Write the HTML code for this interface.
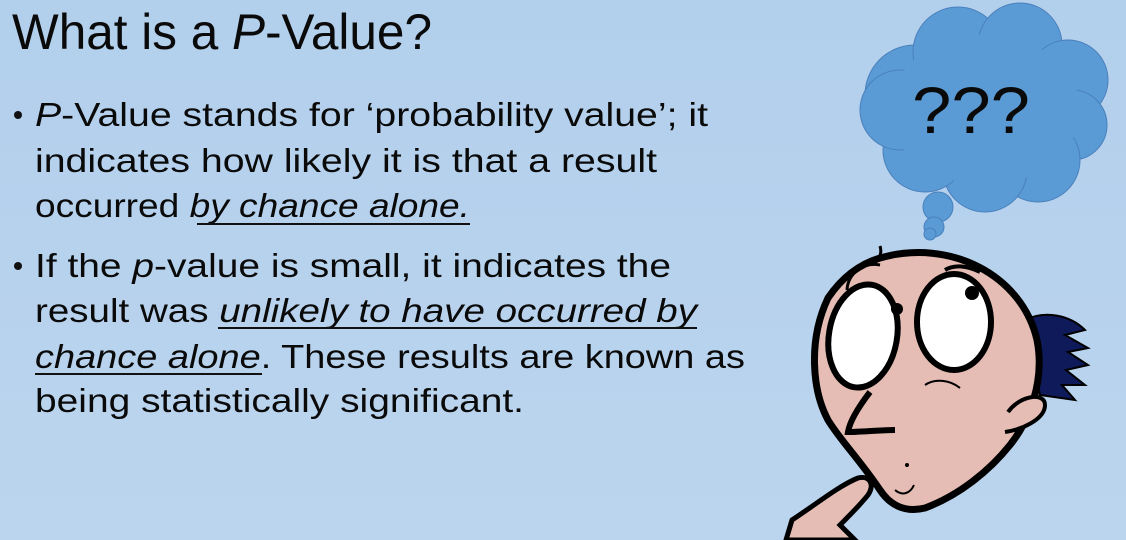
<!DOCTYPE html>
<html><head><meta charset="utf-8"><style>
html,body{margin:0;padding:0;background:#b4d0ec;overflow:hidden}
svg{display:block}
text{font-family:"Liberation Sans",sans-serif;fill:#0a0a0a}
</style></head><body>
<svg width="1126" height="540" viewBox="0 0 1126 540" xmlns="http://www.w3.org/2000/svg">
<defs><linearGradient id="bg" x1="0" y1="0" x2="0" y2="1"><stop offset="0" stop-color="#b2cfec"/><stop offset="1" stop-color="#bcd5ee"/></linearGradient></defs>
<rect width="1126" height="540" fill="url(#bg)"/>
<text x="12" y="49" font-size="50" textLength="420" lengthAdjust="spacingAndGlyphs">What is a <tspan font-style="italic">P</tspan>-Value?</text>
<g font-size="33">
<circle cx="18" cy="115" r="4" fill="#111"/>
<text x="35" y="126" textLength="673" lengthAdjust="spacingAndGlyphs"><tspan font-style="italic">P</tspan>-Value stands for ‘probability value’; it</text>
<text x="35" y="172" textLength="622" lengthAdjust="spacingAndGlyphs">indicates how likely it is that a result</text>
<text x="35" y="217" textLength="435" lengthAdjust="spacingAndGlyphs">occurred <tspan font-style="italic">by chance alone.</tspan></text>
<line x1="197" y1="224" x2="470" y2="224" stroke="#111" stroke-width="2"/>
<circle cx="18" cy="266" r="4" fill="#111"/>
<text x="35" y="277" textLength="636" lengthAdjust="spacingAndGlyphs">If the <tspan font-style="italic">p</tspan>-value is small, it indicates the</text>
<text x="35" y="322" textLength="662" lengthAdjust="spacingAndGlyphs">result was <tspan font-style="italic">unlikely to have occurred by</tspan></text>
<line x1="218" y1="328" x2="697" y2="328" stroke="#111" stroke-width="2"/>
<text x="35" y="368" textLength="710" lengthAdjust="spacingAndGlyphs"><tspan font-style="italic">chance alone</tspan>. These results are known as</text>
<line x1="35" y1="374" x2="262" y2="374" stroke="#111" stroke-width="2"/>
<text x="35" y="412" textLength="489" lengthAdjust="spacingAndGlyphs">being statistically significant.</text>
</g>
<!-- cloud -->
<g fill="#5b9bd5" stroke="#4a80bc" stroke-width="1">
<circle cx="915" cy="95" r="50"/><circle cx="958" cy="52" r="45"/><circle cx="1020" cy="45" r="42"/>
<circle cx="1068" cy="80" r="40"/><circle cx="1072" cy="125" r="35"/><circle cx="1038" cy="160" r="42"/>
<circle cx="985" cy="170" r="42"/><circle cx="925" cy="150" r="42"/><circle cx="900" cy="110" r="40"/>
</g>
<ellipse cx="985" cy="110" rx="95" ry="75" fill="#5b9bd5"/>
<circle cx="938" cy="207" r="15" fill="#5b9bd5" stroke="#4a80bc"/>
<circle cx="934" cy="227" r="10" fill="#5b9bd5" stroke="#4a80bc"/>
<circle cx="930" cy="234" r="6" fill="#5b9bd5" stroke="#4a80bc"/>
<text x="912" y="133" font-size="66" textLength="118" lengthAdjust="spacingAndGlyphs">???</text>
<!-- hair back -->
<path d="M1025 320 C1045 310 1070 315 1085 330 L1065 335 L1088 348 L1068 352 L1088 365 L1066 370 L1085 385 L1062 385 L1075 400 L1040 395 Z" fill="#0e1a5a" stroke="#000" stroke-width="2"/>
<!-- head -->
<path d="M880 258 C950 238 1022 275 1037 340 C1045 380 1030 420 1010 445 C990 470 960 495 925 508 C905 513 890 505 880 490 C860 460 840 440 828 420 C812 390 808 340 828 298 C843 276 860 264 880 258 Z" fill="#e5bdb4" stroke="#000" stroke-width="7"/>
<!-- ear -->
<path d="M1008 412 C1020 395 1045 392 1045 405 C1045 420 1020 430 1005 432" fill="#e5bdb4" stroke="#000" stroke-width="4"/>
<path d="M847 290 C848 272 865 262 880 265 M875 263 C880 258 882 252 880 246" fill="none" stroke="#000" stroke-width="3"/>
<!-- eyes -->
<ellipse cx="863" cy="336" rx="34" ry="52" transform="rotate(10 863 336)" fill="#fff" stroke="#000" stroke-width="6"/>
<ellipse cx="954" cy="322" rx="37" ry="48" fill="#fff" stroke="#000" stroke-width="6"/>
<circle cx="897" cy="309" r="6" fill="#000"/><circle cx="972" cy="293" r="7" fill="#000"/>
<path d="M945 270 C955 264 968 266 980 272" fill="none" stroke="#000" stroke-width="4"/>
<!-- nose -->
<path d="M870 392 C860 405 850 420 848 432 C860 432 880 430 895 430" fill="none" stroke="#000" stroke-width="6"/>
<path d="M925 385 C935 378 950 380 960 388" fill="none" stroke="#000" stroke-width="2"/>
<circle cx="907" cy="465" r="2" fill="#000"/>
<path d="M895 490 C902 496 910 494 914 485" fill="none" stroke="#000" stroke-width="2"/>
<!-- finger -->
<path d="M786 540 L792 520 C815 505 840 485 858 478 C870 475 875 485 868 495 C860 505 850 515 840 525 C845 530 850 535 855 540 Z" fill="#e5bdb4" stroke="#000" stroke-width="5"/>
</svg>
</body></html>
